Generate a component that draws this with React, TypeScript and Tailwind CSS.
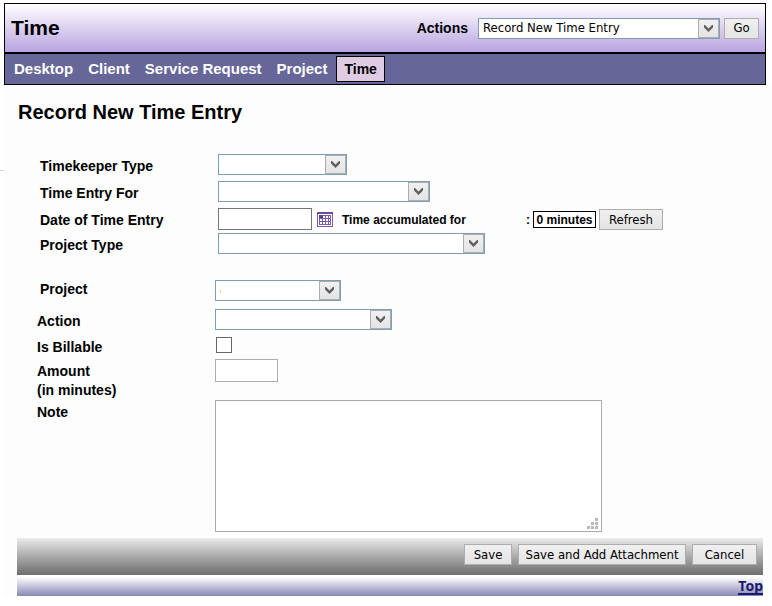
import type { ReactNode } from "react";

const UI = "font-['DejaVu_Sans_Condensed',Tahoma,sans-serif] font-normal";

function Select({ id, width, children }: { id: string; width: string; children?: ReactNode }) {
  return (
    <div className={`relative h-[21px] shrink-0 ${width}`}>
      <select
        id={id}
        className={`block h-full w-full appearance-none border border-[#7f9db9] bg-white pl-1 pr-6 text-[13px] leading-4 text-black ${UI}`}
      >
        {children ?? <option value=""></option>}
      </select>
      <span className="pointer-events-none absolute right-px top-px flex h-[19px] w-[21px] items-center justify-center border border-[#adadad] bg-linear-to-b from-[#f0f0f0] to-[#e4e4e4]">
        <svg width="9" height="7" viewBox="0 0 9 7" aria-hidden="true">
          <path d="M0 0h1l3.5 3.5L8 0h1v2.5L4.5 7 0 2.5z" fill="#606060" />
        </svg>
      </span>
    </div>
  );
}

function Button({ width, children }: { width: string; children: ReactNode }) {
  return (
    <button
      type="button"
      className={`h-[21px] shrink-0 whitespace-nowrap border border-[#adadad] bg-linear-to-b from-[#f0f0f0] to-[#e4e4e4] text-[13px] leading-4 text-black ${width} ${UI}`}
    >
      {children}
    </button>
  );
}

function CalendarIcon() {
  return (
    <svg width="16" height="15" viewBox="0 0 16 15" shapeRendering="crispEdges" aria-hidden="true">
      <rect width="16" height="15" fill="#7a5cae" />
      <rect width="16" height="2" fill="#6a4a9c" />
      <rect x="1" y="2" width="14" height="12" fill="#fff" />
      <rect x="2" y="3" width="12" height="10" fill="#7a5cae" />
      <rect x="2" y="3" width="4" height="3" fill="#5b3f8c" />
      <g fill="#fff">
        <rect x="6" y="4" width="2" height="2" />
        <rect x="9" y="4" width="2" height="2" />
        <rect x="12" y="4" width="1" height="2" />
        <rect x="3" y="7" width="2" height="2" />
        <rect x="6" y="7" width="2" height="2" />
        <rect x="9" y="7" width="2" height="2" />
        <rect x="12" y="7" width="1" height="2" />
        <rect x="3" y="10" width="2" height="2" />
        <rect x="6" y="10" width="2" height="2" />
        <rect x="9" y="10" width="2" height="2" />
        <rect x="12" y="10" width="1" height="2" />
      </g>
    </svg>
  );
}

const tabs = ["Desktop", "Client", "Service Request", "Project"];

export default function App() {
  return (
    <div className="relative min-h-screen bg-white pl-1 pt-[3px] font-['Liberation_Sans',Arial,sans-serif] text-sm font-bold text-black">
      <span className="absolute left-0 top-[170px] h-px w-1 bg-[#d4d4d4]" />
      <header className="mr-1.5 border border-black">
        <div className="flex h-12 items-center bg-linear-to-b from-white to-[#b9a3df] px-1.5">
          <h1 className="grow text-[21px] leading-6">Time</h1>
          <label htmlFor="actions" className="mr-2.5">Actions</label>
          <Select id="actions" width="w-[242px]">
            <option>Record New Time Entry</option>
          </Select>
          <div className="ml-1 flex"><Button width="w-[35px]">Go</Button></div>
        </div>
        <nav className="flex h-8 items-center gap-[15px] border-t-2 border-black bg-[#666699] pl-[9px] text-[15px] leading-5 text-white">
          {tabs.map((t) => (
            <a key={t} href="#">{t}</a>
          ))}
          <a href="#" aria-current="page" className="-ml-1.5 border border-black bg-[#dfcbe2] px-[7px] py-0.5 text-sm leading-5 text-black">
            Time
          </a>
        </nav>
      </header>

      <main className="bg-[#fdfdfd] pt-[15px]">
        <h2 className="pl-3.5 text-xl leading-6">Record New Time Entry</h2>
        <form onSubmit={(e) => e.preventDefault()}>
          <div className="pl-9 pt-[30px] leading-6">
            <div className="flex h-[27px] items-start">
              <label htmlFor="keeper" className="w-[178px]">Timekeeper Type</label>
              <Select id="keeper" width="w-[129px]" />
            </div>
            <div className="flex h-[27px] items-start">
              <label htmlFor="for" className="w-[178px]">Time Entry For</label>
              <Select id="for" width="w-[212px]" />
            </div>
            <div className="flex h-[25px] items-start">
              <label htmlFor="date" className="w-[178px]">Date of Time Entry</label>
              <input id="date" type="text" className="h-[22px] w-[94px] border border-[#767676] bg-white px-1 font-normal" />
              <button type="button" aria-label="Pick a date" className="ml-[5px] mt-1">
                <CalendarIcon />
              </button>
              <span className="ml-[9px] w-[184px] text-xs leading-6">Time accumulated for</span>
              <span className="w-[7px] text-xs leading-6">:</span>
              <output className="mt-[3px] h-[17px] w-[63px] border border-black bg-white text-center text-xs leading-4">0 minutes</output>
              <div className="ml-[3px] mt-px flex"><Button width="w-16">Refresh</Button></div>
            </div>
            <div className="flex items-start">
              <label htmlFor="ptype" className="w-[178px]">Project Type</label>
              <Select id="ptype" width="w-[267px]" />
            </div>
          </div>

          <div className="pl-[33px] pt-[23px] leading-6">
            <div className="flex h-[29px] items-start">
              <label htmlFor="project" className="w-[178px] pl-[3px] leading-[19px]">Project</label>
              <div className="relative">
                <Select id="project" width="w-[126px]" />
                <span className="pointer-events-none absolute left-[5px] top-2.5 h-[3px] w-px bg-[#ffd27a]" />
              </div>
            </div>
            <div className="flex h-7 items-start">
              <label htmlFor="action" className="w-[178px]">Action</label>
              <Select id="action" width="w-[177px]" />
            </div>
            <div className="flex h-[22px] items-start">
              <label htmlFor="billable" className="w-[178px] leading-5">Is Billable</label>
              <input id="billable" type="checkbox" className="ml-px h-4 w-4 appearance-none border border-[#666666] bg-white checked:bg-[#666699]" />
            </div>
            <div className="flex h-[41px] items-start">
              <label htmlFor="amount" className="w-[178px] pt-[3px] leading-[19px]">
                Amount
                <br />
                (in minutes)
              </label>
              <input id="amount" type="text" className="h-[23px] w-[63px] border border-[#abadb3] bg-white px-1 font-normal" />
            </div>
            <div className="flex items-start">
              <label htmlFor="note" className="w-[178px]">Note</label>
              <div className="relative h-[132px] w-[387px]">
                <textarea id="note" className="block h-full w-full resize-none border border-[#ababab] bg-white p-1 font-normal" />
                <svg className="pointer-events-none absolute bottom-[3px] right-1" width="11" height="11" viewBox="0 0 11 11" fill="#b8b8b8" aria-hidden="true">
                  <path d="M8 0h3v3H8zM4 4h3v3H4zM8 4h3v3H8zM0 8h3v3H0zM4 8h3v3H4zM8 8h3v3H8z" />
                </svg>
              </div>
            </div>
          </div>

          <div className="ml-[13px] mr-[9px] mt-1.5 flex h-[37px] items-start justify-end gap-1.5 bg-linear-to-b from-[#ebebeb] to-[#6e6e6e] pr-1.5 pt-1.5">
            <Button width="w-12">Save</Button>
            <Button width="w-[168px]">Save and Add Attachment</Button>
            <Button width="w-[65px]">Cancel</Button>
          </div>
        </form>
        <footer className="ml-[13px] mr-[9px] border-t-2 border-white">
          <div className="flex h-[19px] justify-end bg-linear-to-b from-white to-[#8a88b4]">
            <a href="#" className="h-[18px] border-b-2 border-[#191970] font-['Noto_Sans',sans-serif] text-sm leading-[18px] text-[#191970]">Top</a>
          </div>
        </footer>
      </main>
    </div>
  );
}
